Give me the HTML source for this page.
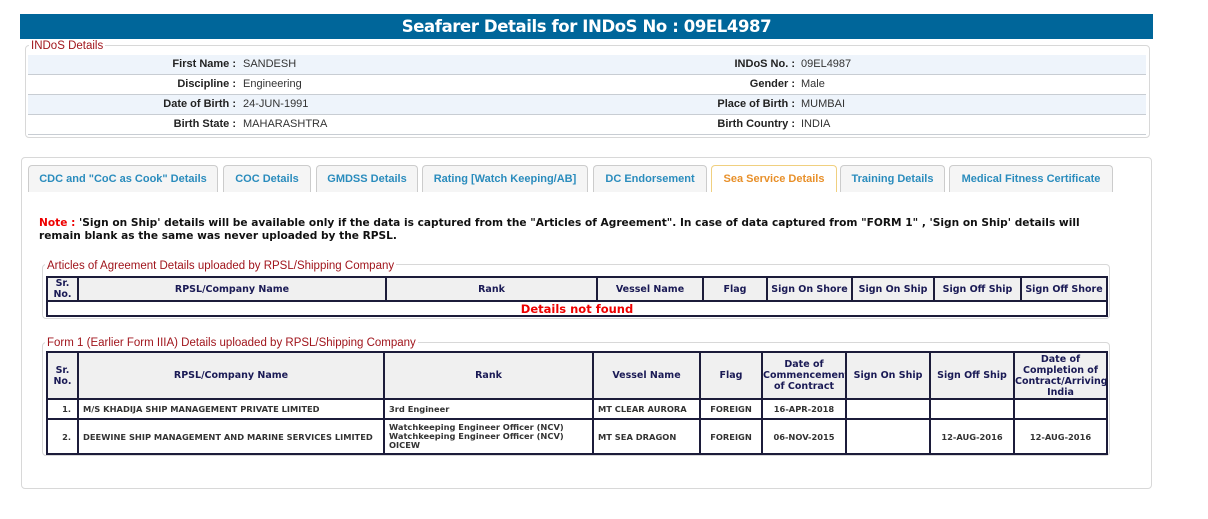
<!DOCTYPE html>
<html><head><meta charset="utf-8"><style>
*{margin:0;padding:0;box-sizing:border-box}
body{width:1208px;height:519px;background:#fff;position:relative;font-family:"Liberation Sans",Arial,sans-serif;overflow:hidden}
.abs{position:absolute}
.title{left:20px;top:14px;width:1133px;height:25px;background:#00669a;color:#fff;font-weight:bold;font-size:16.5px;text-align:center;line-height:25px;font-family:"DejaVu Sans",sans-serif;letter-spacing:-0.4px}
.fs{border:1px solid #d8d8d8;border-radius:4px}
.legend{position:absolute;background:#fff;color:#a0151c;font-size:11.5px;padding:0 2px;line-height:12px}
.row{position:absolute;left:28px;width:1118px;height:20px;border-bottom:1px solid #c8cdd3;font-size:11px;color:#333;line-height:19px}
.row.a{background:#eef4fb}
.row span{position:absolute}
.l{text-align:right;width:240px;color:#222;font-weight:bold}
.tab{position:absolute;top:165px;height:27px;border:1px solid #ccc;border-bottom:none;border-radius:4px 4px 0 0;background:#f5f5f5;color:#2a8cbd;font-weight:bold;font-size:11px;text-align:center;line-height:26px}
.tab.on{background:#fff;border-color:#f0d080;color:#e8902a}
.note{left:39px;top:217px;width:1080px;font-family:"DejaVu Sans",sans-serif;font-size:10.6px;font-weight:bold;color:#111;line-height:13px}
table{position:absolute;border-collapse:collapse;table-layout:fixed;font-family:"DejaVu Sans",sans-serif;font-size:9.5px}
td,th{border:2px solid #1c1c3a;text-align:center;overflow:hidden}
th{background:#f0f0f0;color:#1a1a55;font-weight:bold;line-height:11px}
td{color:#333;font-weight:bold;font-size:8.3px}
td.lf{text-align:left;padding-left:4px}
</style></head><body>
<div class="abs title">Seafarer Details for INDoS No : 09EL4987</div>
<div class="abs fs" style="left:25px;top:45px;width:1125px;height:93px"></div>
<div class="legend" style="left:29px;top:40px">INDoS Details</div>
<div class="row a" style="top:55px"><span class="l" style="left:-32px">First Name :</span><span style="left:215px">SANDESH</span><span class="l" style="left:527px">INDoS No. :</span><span style="left:773px">09EL4987</span></div>
<div class="row" style="top:75px"><span class="l" style="left:-32px">Discipline :</span><span style="left:215px">Engineering</span><span class="l" style="left:527px">Gender :</span><span style="left:773px">Male</span></div>
<div class="row a" style="top:95px"><span class="l" style="left:-32px">Date of Birth :</span><span style="left:215px">24-JUN-1991</span><span class="l" style="left:527px">Place of Birth :</span><span style="left:773px">MUMBAI</span></div>
<div class="row" style="top:115px"><span class="l" style="left:-32px">Birth State :</span><span style="left:215px">MAHARASHTRA</span><span class="l" style="left:527px">Birth Country :</span><span style="left:773px">INDIA</span></div>

<div class="abs fs" style="left:21px;top:157px;width:1131px;height:332px"></div>
<div class="tab" style="left:28px;width:190px">CDC and "CoC as Cook" Details</div>
<div class="tab" style="left:223px;width:88px">COC Details</div>
<div class="tab" style="left:316px;width:102px">GMDSS Details</div>
<div class="tab" style="left:422px;width:166px">Rating [Watch Keeping/AB]</div>
<div class="tab" style="left:593px;width:114px">DC Endorsement</div>
<div class="tab on" style="left:711px;width:126px">Sea Service Details</div>
<div class="tab" style="left:840px;width:105px">Training Details</div>
<div class="tab" style="left:949px;width:164px">Medical Fitness Certificate</div>

<div class="abs note"><span style="color:#e00">Note :</span> 'Sign on Ship' details will be available only if the data is captured from the "Articles of Agreement". In case of data captured from "FORM 1" , 'Sign on Ship' details will remain blank as the same was never uploaded by the RPSL.</div>

<div class="abs fs" style="left:42px;top:264px;width:1068px;height:55px"></div>
<div class="legend" style="left:45px;top:260px">Articles of Agreement Details uploaded by RPSL/Shipping Company</div>
<table style="left:46px;top:276px;width:1060px">
<colgroup><col style="width:31px"><col style="width:308px"><col style="width:211px"><col style="width:106px"><col style="width:64px"><col style="width:85px"><col style="width:82px"><col style="width:87px"><col style="width:86px"></colgroup>
<tr style="height:23px"><th>Sr.<br>No.</th><th>RPSL/Company Name</th><th>Rank</th><th>Vessel Name</th><th>Flag</th><th>Sign On Shore</th><th>Sign On Ship</th><th>Sign Off Ship</th><th>Sign Off Shore</th></tr>
<tr style="height:15px"><td colspan="9" style="color:#e00;font-size:11.5px;line-height:12px">Details not found</td></tr>
</table>

<div class="abs fs" style="left:42px;top:342px;width:1068px;height:114px"></div>
<div class="legend" style="left:45px;top:337px">Form 1 (Earlier Form IIIA) Details uploaded by RPSL/Shipping Company</div>
<table style="left:46px;top:351px;width:1060px">
<colgroup><col style="width:31px"><col style="width:306px"><col style="width:209px"><col style="width:107px"><col style="width:62px"><col style="width:84px"><col style="width:84px"><col style="width:84px"><col style="width:93px"></colgroup>
<tr style="height:47px"><th>Sr.<br>No.</th><th>RPSL/Company Name</th><th>Rank</th><th>Vessel Name</th><th>Flag</th><th>Date of Commencement of Contract</th><th>Sign On Ship</th><th>Sign Off Ship</th><th>Date of Completion of Contract/Arriving India</th></tr>
<tr style="height:20px"><td style="text-align:right;padding-right:6px">1.</td><td class="lf">M/S KHADIJA SHIP MANAGEMENT PRIVATE LIMITED</td><td class="lf">3rd Engineer</td><td class="lf">MT CLEAR AURORA</td><td>FOREIGN</td><td>16-APR-2018</td><td></td><td></td><td></td></tr>
<tr style="height:35px"><td style="text-align:right;padding-right:6px">2.</td><td class="lf">DEEWINE SHIP MANAGEMENT AND MARINE SERVICES LIMITED</td><td class="lf" style="line-height:9px">Watchkeeping Engineer Officer (NCV)<br>Watchkeeping Engineer Officer (NCV)<br>OICEW</td><td class="lf">MT SEA DRAGON</td><td>FOREIGN</td><td>06-NOV-2015</td><td></td><td>12-AUG-2016</td><td>12-AUG-2016</td></tr>
</table>
</body></html>
